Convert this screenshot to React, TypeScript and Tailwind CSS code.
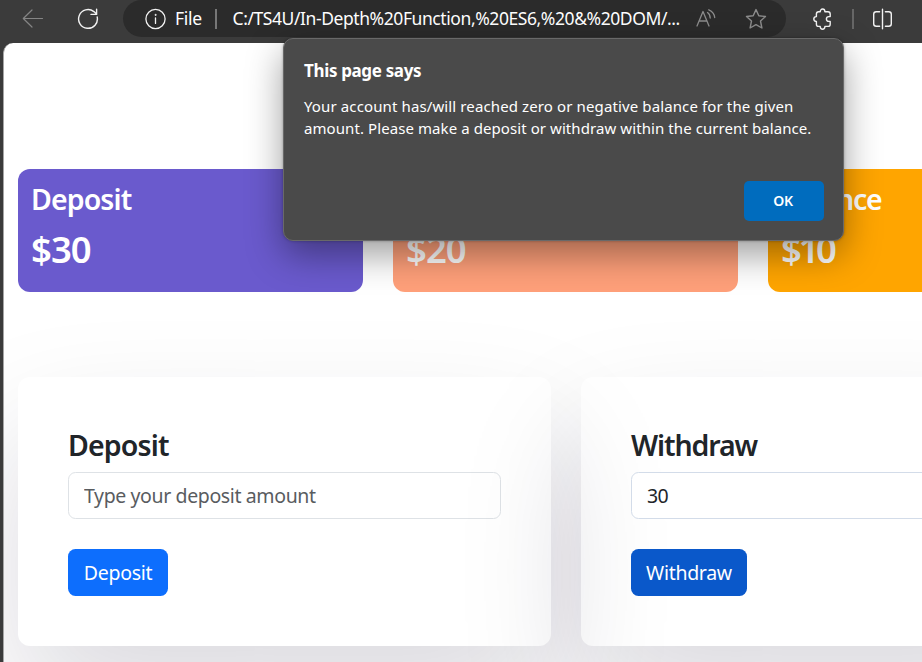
import React from "react";

const stats = [
  { label: "Deposit", amount: "$30", color: "bg-[#6a5acd]", labelClass: "tracking-[-0.9px]", amountClass: "tracking-[-1px]" },
  { label: "Withdraw", amount: "$20", color: "bg-[#ffa07a]", labelClass: "tracking-[-0.9px]", amountClass: "tracking-[-1px]" },
  { label: "Balance", amount: "$10", color: "bg-[#ffa500]", labelClass: "tracking-[-1.3px]", amountClass: "tracking-[-3.4px]" },
];

function Toolbar() {
  return (
    <header className="flex h-[43px] w-full items-start bg-[#3b3b3b] text-white">
      <div className="flex h-[37px] w-[123px] shrink-0 items-center pl-[22px]">
        <svg width="22" height="22" viewBox="0 0 22 22" fill="none" stroke="#858585" strokeWidth="1.2" strokeLinecap="round" strokeLinejoin="round">
          <path d="M20.5 10.5H1.5M10 2L1.3 10.5L10 19" />
        </svg>
        <svg className="ml-[33px]" width="22" height="22" viewBox="0 0 22 22" fill="none" stroke="#f2f2f2" strokeWidth="1.4" strokeLinecap="round" strokeLinejoin="round">
          <path d="M20.2 9A9.4 9.4 0 1 1 16.9 3.6L19.6 6M19.6 1.2V6.4H14" />
        </svg>
      </div>
      <div className="flex h-[37px] w-[663px] shrink-0 items-center rounded-full bg-[#2b2b2b] pl-[21px]">
        <svg width="22" height="22" viewBox="0 0 22 22" fill="none" stroke="#f2f2f2" strokeWidth="1.3" strokeLinecap="round">
          <circle cx="11.5" cy="11" r="9.6" />
          <path d="M11.5 10V15.4" />
          <circle cx="11.5" cy="6.9" r="0.6" fill="#f2f2f2" strokeWidth="0.7" />
        </svg>
        <span className="ml-[9px] w-[40px] whitespace-nowrap text-[17.5px] tracking-[-0.3px]">File</span>
        <span className="h-5 w-[1.5px] bg-[#777777]" />
        <span className="ml-4 w-[464px] whitespace-nowrap text-[17.5px] tracking-[-0.42px]">
          C:/TS4U/In-Depth%20Function,%20ES6,%20&amp;%20DOM/...
        </span>
        <svg className="-ml-px" width="21" height="22" viewBox="0 0 21 22" fill="none" stroke="#8c8c8c" strokeWidth="1.3" strokeLinecap="round" strokeLinejoin="round">
          <path d="M1 18L7 3.5L13 18M3.2 13H10.8M11.5 4.5Q14 6 14.2 10M12.8 1.8Q18.4 4.3 18.7 9.5" />
        </svg>
        <svg className="ml-[28px]" width="22" height="22" viewBox="0 0 22 22" fill="none" stroke="#8c8c8c" strokeWidth="1.4" strokeLinejoin="round">
          <path d="M11 1.6L13.8 7.8L20.5 8.5L15.5 13L16.9 20L11 16.6L5.1 20L6.5 13L1.5 8.5L8.2 7.8Z" />
        </svg>
      </div>
      <div className="flex h-[37px] flex-1 items-center pl-[26px]">
        <svg width="22" height="22" viewBox="0 0 22 22" fill="none" stroke="#f2f2f2" strokeWidth="1.4" strokeLinejoin="round" strokeLinecap="round">
          <path d="M6.6 3.8H8.2A2.2 2.6 0 0 1 12.9 3.8H16Q18.2 3.8 18.2 6V8.6H16.8A2.4 2.4 0 0 0 16.8 13.4H18.2V16.2Q18.2 18.4 16 18.4H12.9A2.2 2.6 0 0 1 8.2 18.4H6.6Q4.4 18.4 4.4 16.2V13.4A2.6 2.4 0 0 1 4.4 8.6V6Q4.4 3.8 6.6 3.8Z" />
        </svg>
        <span className="ml-[18px] h-5 w-[1.5px] bg-[#666666]" />
        <svg className="ml-[18px]" width="22" height="22" viewBox="0 0 22 22" fill="none" stroke="#f2f2f2" strokeWidth="1.4" strokeLinecap="round">
          <path d="M7.6 3.7H4.2Q1.7 3.7 1.7 6.2V15.8Q1.7 18.3 4.2 18.3H7.6M13.4 3.7H16.8Q19.3 3.7 19.3 6.2V15.8Q19.3 18.3 16.8 18.3H13.4M10.5 1.3V20.7" />
        </svg>
      </div>
    </header>
  );
}

function FormCard({ title, titleClass, children, button, buttonClass }: {
  title: string;
  titleClass: string;
  children: React.ReactNode;
  button: string;
  buttonClass: string;
}) {
  return (
    <section className="h-[269px] w-[533px] shrink-0 rounded-xl p-[50px] shadow-[0_60px_125px_0_rgba(17,12,46,0.15)]">
      <h3 className={`h-[36px] text-[28.5px] font-semibold leading-[36px] text-[#212529] ${titleClass}`}>{title}</h3>
      <div className="mt-[9px]">{children}</div>
      <button className={`mt-[30px] block h-[47px] rounded-[7.5px] text-[19.5px] text-white ${buttonClass}`}>{button}</button>
    </section>
  );
}

function AlertDialog() {
  return (
    <div className="absolute left-[283px] top-[38px] h-[203px] w-[561px] rounded-[10px] border border-[#696969] bg-[#4a4a4a] pl-5 pr-[19px] text-white shadow-[0_14px_36px_rgba(0,0,0,0.38),0_0_3px_rgba(0,0,0,0.3)]">
      <h2 className="mt-5 h-6 whitespace-nowrap text-[17px] font-bold leading-6 tracking-[-0.35px]">This page says</h2>
      <div className="mt-3 whitespace-nowrap text-[15px] leading-[22px]">
        <p className="tracking-[0.12px]">Your account has/will reached zero or negative balance for the given</p>
        <p className="tracking-[0.08px]">amount. Please make a deposit or withdraw within the current balance.</p>
      </div>
      <div className="mt-[42px] flex justify-end">
        <button className="h-10 w-20 rounded-[5px] bg-[#006cbe] pb-0.5 pr-0.5 text-[14px] font-semibold tracking-[-0.3px]">OK</button>
      </div>
    </div>
  );
}

export default function App() {
  return (
    <div className="relative h-[662px] w-[922px] overflow-hidden bg-[#3b3b3b] font-['Noto_Sans','Open_Sans',sans-serif]">
      <Toolbar />
      <main className="ml-[3px] h-[619px] overflow-hidden rounded-tl-[10px] border-l border-[#a5a5a5] bg-white pl-[14px] pt-[126px]">
        <div className="flex gap-[30px]">
          {stats.map((s) => (
            <div key={s.label} className={`h-[123px] w-[345px] shrink-0 rounded-xl px-[13px] pt-3 text-white ${s.color}`}>
              <h3 className={`h-9 text-[28.5px] font-semibold leading-9 ${s.labelClass}`}>{s.label}</h3>
              <p className={`mt-2.5 h-[45px] text-[36.5px] font-semibold leading-[45px] ${s.amountClass}`}>{s.amount}</p>
            </div>
          ))}
        </div>
        <div className="mt-[85px] flex gap-[30px]">
          <FormCard title="Deposit" titleClass="tracking-[-0.85px]" button="Deposit" buttonClass="w-[100px] bg-[#0d6efd] tracking-[-0.3px]">
            <input
              className="block h-[47px] w-full rounded-[7.5px] border border-[#dee2e6] bg-transparent px-[15px] text-[19.5px] tracking-[-0.38px] placeholder:text-[#595c5f]"
              placeholder="Type your deposit amount"
            />
          </FormCard>
          <FormCard title="Withdraw" titleClass="tracking-[-1.1px]" button="Withdraw" buttonClass="w-[116px] bg-[#0a58ca] tracking-[-0.3px]">
            <input
              className="block h-[47px] w-full rounded-[7.5px] border border-[#d3dce9] bg-white px-[15px] text-[19.5px] tracking-[-0.6px] text-[#212529]"
              defaultValue="30"
            />
          </FormCard>
        </div>
      </main>
      <AlertDialog />
    </div>
  );
}
